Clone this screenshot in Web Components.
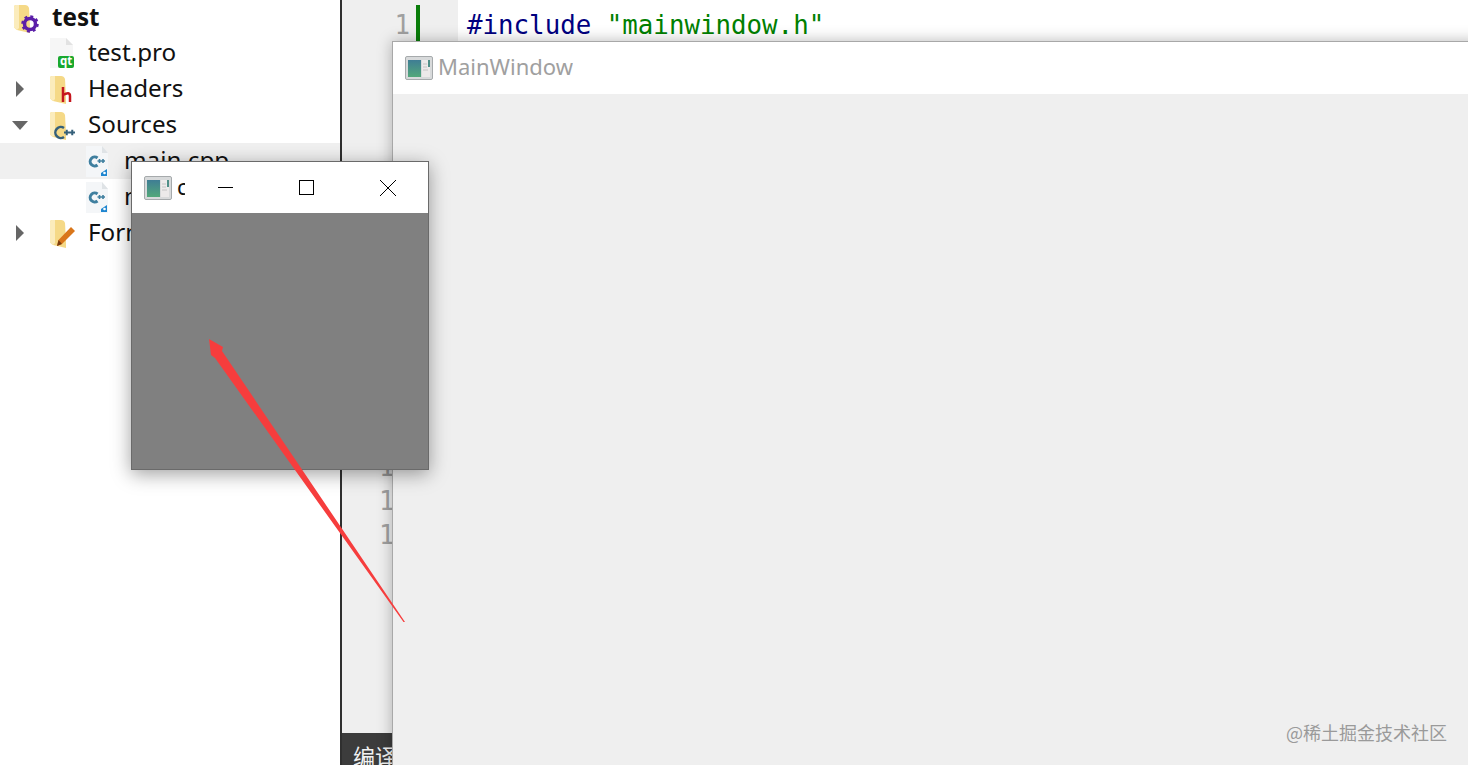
<!DOCTYPE html>
<html lang="en">
<head>
<meta charset="utf-8">
<title>MainWindow</title>
<style>
  html, body { margin: 0; height: 100%; background: #fff; overflow: hidden; }
</style>
</head>
<body>

<template id="file-icon-tpl">
  <style>
    :host { display: block; width: 28px; height: 32px; flex: none; }
    svg { display: block; overflow: visible; }
  </style>
  <svg width="28" height="32" viewBox="0 0 28 32"></svg>
</template>

<template id="tree-row-tpl">
  <style>
    :host {
      display: flex;
      align-items: center;
      height: 36px;
      padding-left: calc(var(--depth, 1) * 36px + 14px);
      font: 24.2px/34px "Noto Sans", sans-serif;
      color: #111;
      white-space: nowrap;
    }
    :host([selected]) { background: #f0f0f0; }
    :host([root]) { font-weight: 700; height: 35px; }
    .arrow { width: 38px; margin-left: -38px; flex: none; }
    .label { margin: 0 0 2px 10px; }
  </style>
  <div class="arrow"><slot name="arrow"></slot></div>
  <slot name="icon"></slot>
  <span class="label"><slot></slot></span>
</template>

<template id="project-tree-tpl">
  <style>
    :host { display: block; width: 340px; border-right: 2px solid #2f2f2f; background: #fff; }
  </style>
  <slot></slot>
</template>

<template id="code-editor-tpl">
  <style>
    :host {
      display: grid;
      grid-template-columns: 116px 1fr;
      grid-template-rows: 1fr 32px;
      font: 25.8px/34px "DejaVu Sans Mono", monospace;
      min-width: 0;
    }
    .gutter { background: #efefef; padding-top: 8px; color: #a0a0a0; overflow: hidden; }
    .num { width: 68px; height: 34px; text-align: right; }
    .num.current { position: relative; }
    .spacer { height: 408px; }
    .bar { position: absolute; left: 74px; top: -3px; width: 4px; height: 36px; background: #0a7d0a; }
    .code { padding: 8px 0 0 9px; color: #000080; white-space: pre; overflow: hidden; background: #fff; }
    ::slotted(b) { font-weight: 400; color: #008000; }
    .status {
      grid-column: 1 / 3;
      background: #3c3c3c;
      color: #f2f2f2;
      font: 22px/44px "Noto Sans CJK SC", sans-serif;
      padding-left: 11px;
      overflow: hidden;
    }
  </style>
  <div class="gutter">
    <div class="num current">1<span class="bar"></span></div>
    <div class="spacer"></div>
    <div class="num">14</div>
    <div class="num">15</div>
    <div class="num">16</div>
  </div>
  <div class="code"><slot></slot></div>
  <div class="status"><slot name="status"></slot></div>
</template>

<template id="os-window-tpl">
  <style>
    :host {
      position: absolute;
      display: flex;
      flex-direction: column;
      box-sizing: border-box;
      background: var(--client, #efefef);
      border: 1px solid var(--edge, #a8a8a8);
      box-shadow: var(--shadow, 0 0 14px rgba(0,0,0,.28));
      font: 22px "Noto Sans", sans-serif;
    }
    header {
      height: var(--bar, 52px);
      flex: none;
      background: #fff;
      display: flex;
      align-items: center;
      padding-left: 12px;
      color: var(--title, #a0a0a0);
      overflow: hidden;
    }
    .icon { width: 28px; height: 24px; flex: none; margin-right: 5px; }
    .title { overflow: hidden; white-space: nowrap; flex: none; width: var(--title-width, auto); line-height: 46px; height: 50px; }
    .controls { display: flex; margin-left: 17px; flex: none; }
    :host([main]) .controls { display: none; }
    .controls svg { display: block; width: 81px; height: 51px; flex: none; }
  </style>
  <header>
    <svg class="icon" viewBox="0 0 28 24">
      <defs>
        <linearGradient id="pane" x1="0" y1="0" x2="0" y2="1">
          <stop offset="0" stop-color="#3f7d94"/>
          <stop offset="1" stop-color="#52a87a"/>
        </linearGradient>
      </defs>
      <rect x=".5" y=".5" width="27" height="23" rx="1.5" fill="#d8dadb" stroke="#a6aaac"/>
      <rect x="3" y="4" width="13" height="17" fill="url(#pane)"/>
      <rect x="17" y="4" width="8" height="17" fill="#eceaea"/>
      <rect x="23" y="4" width="2" height="7" fill="#4f8f88"/>
      <path d="M18 8h4M18 11h4M18 14h5" stroke="#c4c4c4"/>
    </svg>
    <span class="title"><slot></slot></span>
    <div class="controls">
      <svg viewBox="0 0 81 51"><path d="M16 25.500h15" stroke="#000" fill="none"/></svg>
      <svg viewBox="0 0 81 51"><rect x="16.500" y="18.500" width="14" height="14" stroke="#000" fill="none"/></svg>
      <svg viewBox="0 0 81 51"><path d="M16 18l16 16M32 18L16 34" stroke="#000" fill="none"/></svg>
    </div>
  </header>
</template>

<template id="ide-desktop-tpl">
  <style>
    :host { display: grid; grid-template-columns: 342px 1fr; position: relative; width: 1468px; height: 765px; overflow: hidden; background: #fff; }
    .arrow { position: absolute; left: 0; top: 0; pointer-events: none; }
    .mark { position: absolute; right: 21px; top: 719px; font: 18px/26px "Noto Sans CJK SC", sans-serif; color: #9a9a9a; }
  </style>
  <slot name="tree"></slot>
  <slot name="editor"></slot>
  <slot name="windows"></slot>
  <svg class="arrow" width="1468" height="765" viewBox="0 0 1468 765">
    <polygon points="209,339 223,347 222,351 405,622 403.500,622 215,358 211,355" fill="#f63d3d"/>
  </svg>
  <div class="mark"><slot name="mark"></slot></div>
</template>

<ide-desktop>
  <project-tree slot="tree">
    <tree-row root style="--depth:0"><file-icon slot="icon" kind="project"></file-icon>test</tree-row>
    <tree-row><file-icon slot="icon" kind="pro"></file-icon>test.pro</tree-row>
    <tree-row><tree-arrow slot="arrow"></tree-arrow><file-icon slot="icon" kind="headers"></file-icon>Headers</tree-row>
    <tree-row><tree-arrow slot="arrow" open></tree-arrow><file-icon slot="icon" kind="sources"></file-icon>Sources</tree-row>
    <tree-row selected style="--depth:2"><file-icon slot="icon" kind="cpp"></file-icon>main.cpp</tree-row>
    <tree-row style="--depth:2"><file-icon slot="icon" kind="cpp"></file-icon>mainwindow.cpp</tree-row>
    <tree-row><tree-arrow slot="arrow"></tree-arrow><file-icon slot="icon" kind="forms"></file-icon>Forms</tree-row>
  </project-tree>

  <code-editor slot="editor">#include <b>"mainwindow.h"</b><span slot="status">编译</span></code-editor>

  <os-window slot="windows" main style="left:392px;top:41px;width:1090px;height:740px">MainWindow</os-window>
  <os-window slot="windows" style="left:131px;top:161px;width:298px;height:309px;--bar:51px;--client:#808080;--edge:#6a6a6a;--title:#111;--title-width:8px;--shadow:0 4px 18px rgba(0,0,0,.38)">c</os-window>

  <span slot="mark">@稀土掘金技术社区</span>
</ide-desktop>

<script>
  'use strict';

  const folder = '<path d="M0 3 Q0 1 2 1 H11 Q14 1 15 4 L16 22 V29 L3 26 Q1 25 0 23Z" fill="#f5d987"/><path d="M0 3 Q0 1 2 1 H5 V24 L3 26 Q1 25 0 23Z" fill="#fbecbc"/>';

  const icons = {
    project: `<g transform="translate(0,2)">${folder}</g>
      <g transform="translate(16,22)"><circle r="5.500" fill="none" stroke="#5b1fa8" stroke-width="3.500"/><circle r="7.500" fill="none" stroke="#5b1fa8" stroke-width="2.500" stroke-dasharray="2.900 3"/></g>`,
    pro: `<path d="M0 1 H16 L23 8 V31 H0Z" fill="#f6f6f6"/><path d="M16 1 V8 H23Z" fill="#e2e2e2"/>
      <rect x="8" y="19" width="16" height="12" rx="2" fill="#18a82e"/>
      <text x="10" y="28" font-family="Noto Sans, sans-serif" font-weight="700" font-size="11.500" fill="#fff">qt</text>`,
    headers: `<g transform="translate(0,2)">${folder}<path d="M13 12 V27 M13 20 Q20 16 20 21 V27" stroke="#c5161d" stroke-width="2.500" fill="none"/></g>`,
    sources: `<g transform="translate(0,2)">${folder}
      <path d="M14 17 A5.500 5.500 0 1 0 14 26" stroke="#35607a" stroke-width="2.500" fill="none"/>
      <path d="M14 21.500h5.500M16.750 18.750v5.500M19.500 21.500h5.500M22.250 18.750v5.500" stroke="#35607a" stroke-width="2"/></g>`,
    cpp: `<path d="M0 1 H16 L22 8 V32 H0Z" fill="#f4f6f8"/><path d="M16 1 V8 H22Z" fill="#dfe3e6"/>
      <path d="M11.500 13 A4.500 4.500 0 1 0 11.500 20" fill="none" stroke="#3f7f9f" stroke-width="3"/>
      <path d="M11.500 16h4M13.500 14v4M15 16h4M17 14v4" stroke="#3f7f9f" stroke-width="1.600"/>
      <path d="M15 28 L21 24 V31 H15Z" fill="#1f86d0"/><circle cx="18.500" cy="28" r="1.300" fill="#fff"/>`,
    forms: `<g transform="translate(0,2)">${folder}<path d="M7 27 L8.500 21 L21 8 L25 12 L12 25Z" fill="#d9761a"/><path d="M7 27 L8.500 21 L12 25Z" fill="#7a3d10"/></g>`
  };

  class FileIcon extends HTMLElement {
    constructor() {
      super();
      const shadow = this.attachShadow({ mode: 'open' });
      shadow.appendChild(document.getElementById('file-icon-tpl').content.cloneNode(true));
      shadow.querySelector('svg').innerHTML = icons[this.getAttribute('kind')] || '';
    }
  }

  class TreeArrow extends HTMLElement {
    constructor() {
      super();
      const shadow = this.attachShadow({ mode: 'open' });
      const open = this.hasAttribute('open');
      shadow.innerHTML = `
        <style>:host { display: block; width: 16px; height: 16px; } svg { display: block; }</style>
        <svg width="16" height="16" viewBox="0 0 16 16">
          <path d="${open ? 'M0 4H16L8 13Z' : 'M4 0L12 8L4 16Z'}" fill="#666"/>
        </svg>`;
    }
  }

  // the rest only clone their template and lean on slots
  function simple(name) {
    customElements.define(name, class extends HTMLElement {
      constructor() {
        super();
        this.attachShadow({ mode: 'open' })
          .appendChild(document.getElementById(name + '-tpl').content.cloneNode(true));
      }
    });
  }

  customElements.define('file-icon', FileIcon);
  customElements.define('tree-arrow', TreeArrow);
  ['tree-row', 'project-tree', 'code-editor', 'os-window', 'ide-desktop'].forEach(simple);
</script>
</body>
</html>
